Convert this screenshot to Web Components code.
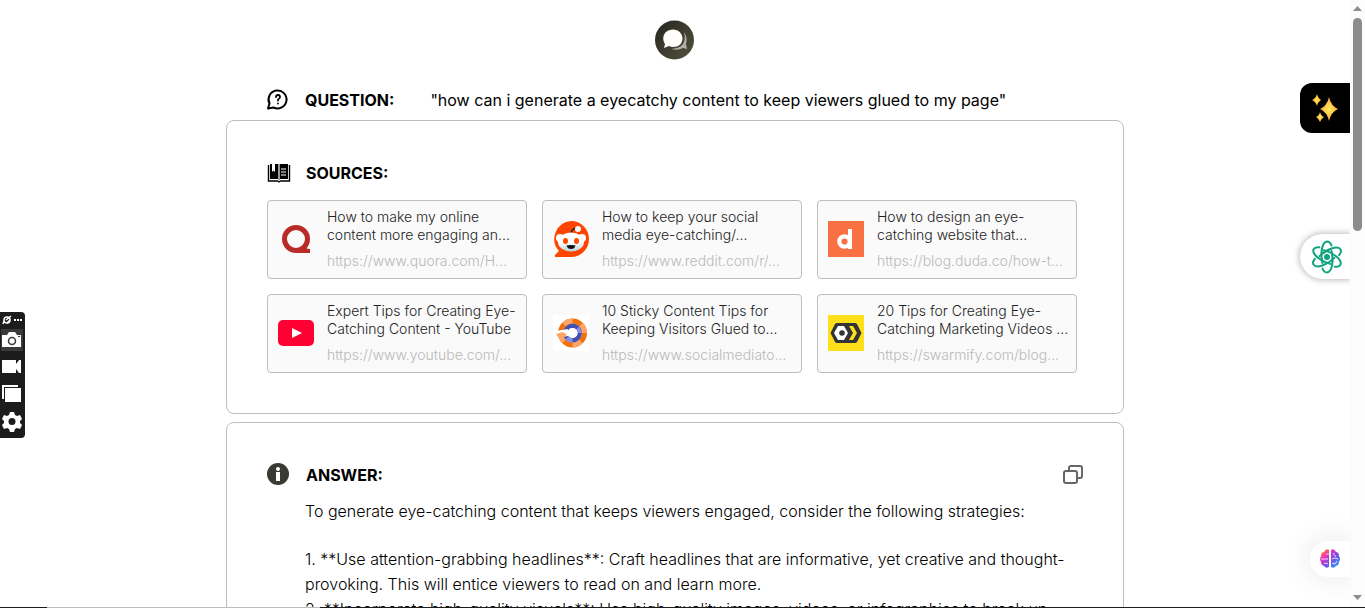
<!DOCTYPE html>
<html lang="en">
<head>
<meta charset="utf-8">
<title>Answer</title>
<style>
html,body{height:100%}
body{margin:0;background:#fff;color:#000;overflow:hidden;font:300 16px/25px Inter,"Open Sans",sans-serif}
</style>
</head>
<body>
<answer-page></answer-page>
<script>
const define = (name, html) => customElements.define(name, class extends HTMLElement {
  constructor() {
    super();
    const t = document.createElement('template');
    t.innerHTML = html;
    this.attachShadow({mode: 'open'}).append(t.content.cloneNode(true));
  }
});

const logos = {
  quora: '<circle cx="18" cy="18" r="11.500" fill="none" stroke="#b92b27" stroke-width="5"/><path d="M21 27l5-3q1 4 6 4v4H19z" fill="#b92b27"/>',
  reddit: '<defs><linearGradient id="g" x2="0" y2="1"><stop offset=".5" stop-color="#fff"/><stop offset="1" stop-color="#bccfd8"/></linearGradient></defs><path d="M18 0a18 18 0 1 1 0 36H3q-2 0-1-2l4-4A18 18 0 0 1 18 0z" fill="#ff4500"/><path d="M18 12q1-4 5-5" fill="none" stroke="#222" stroke-width="1.500"/><circle cx="25" cy="8" r="3" fill="#f4f8fa"/><circle cx="7" cy="17" r="4" fill="#fff"/><circle cx="29" cy="17" r="4" fill="#fff"/><ellipse cx="18" cy="21" rx="13" ry="9.500" fill="url(#g)"/><ellipse cx="12.500" cy="20" rx="2.500" ry="3" fill="#ff4500"/><ellipse cx="23.500" cy="20" rx="2.500" ry="3" fill="#ff4500"/><path d="M13.500 24.500q4.500-1 9 0-1 3.500-4.500 3.500t-4.500-3.500z" fill="#111"/>',
  duda: '<path fill="#f97042" d="M0 0h36v36H0z"/><circle cx="16.500" cy="20.500" r="5.200" fill="none" stroke="#fff" stroke-width="4.200"/><path d="M20 8h4v20h-4z" fill="#fff"/>',
  youtube: '<rect y="5" width="36" height="26" rx="5" fill="#ff0033"/><path d="M14 13l10 5-10 5z" fill="#fff"/>',
  toolbox: '<path fill="#fff" d="M0 0h36v36H0z"/><g fill="none"><circle cx="19.500" cy="18" r="12" stroke="#ef7109" stroke-width="5"/><path d="M11 9.500a12 12 0 0 1 8.500-3.500M28 9.500a12 12 0 0 1 3.500 8.500M28 26.500a12 12 0 0 1-8.500 3.500M7.500 18a12 12 0 0 0 3.500 8.500" stroke="#ffa466" stroke-width="5"/><circle cx="19.500" cy="18" r="7.200" stroke="#4450ae" stroke-width="4.500"/><path d="M14 23a7.200 7.200 0 0 0 5.500 2.200M24.500 13a7.200 7.200 0 0 1 2.200 5" stroke="#8790e4" stroke-width="4"/></g><path d="M3 16l12-2v7l-6 1-6-3z" fill="#fff"/><path d="M3 19l7-2 4 3-5 3-4-1z" fill="#ffa466"/><circle cx="19.500" cy="18" r="5" fill="#fff"/>',
  swarmify: '<path fill="#ffdf1a" d="M0 0h36v36H0z"/><path d="M9 8h18q1 0 2 1l4 8q1 1 0 2l-4 8q-1 1-2 1H9q-1 0-2-1l-4-8q-1-1 0-2l4-8q1-1 2-1z" fill="#343437"/><path d="M10 11h6l4 7-4 7h-6l-4-7z" fill="#fff"/><circle cx="14" cy="18" r="2.800" fill="#343437"/><path d="M21 11h4l4 7-4 7h-4l4-7z" fill="#ffdf1a"/>'
};

customElements.define('source-card', class extends HTMLElement {
  connectedCallback() {
    const root = this.attachShadow({mode: 'open'});
    root.innerHTML = `<style>
      :host{display:block;min-width:0}
      a{box-sizing:border-box;height:79px;display:flex;align-items:center;gap:13px;padding:0 4px 2px 10px;border:1px solid #bebebe;border-radius:4px;background:#fafafa;color:#222;text-decoration:none;overflow:hidden;font-size:14px;line-height:18px}
      svg{flex:none;width:36px;height:36px}
      div{min-width:0;display:flex;flex-direction:column;white-space:nowrap}
      span{color:#b9b9b9;margin-top:8px}
    </style><a href="${this.getAttribute('href')}"><svg viewBox="0 0 36 36" aria-hidden="true">${logos[this.getAttribute('logo')]}</svg><div><slot></slot><span>${this.getAttribute('label')}</span></div></a>`;
  }
});

define('section-title', `<style>
  :host{display:flex;align-items:center;gap:15px}
  h2{margin:0;font-size:16px;line-height:24px;font-weight:700}
  ::slotted(svg){flex:none;width:24px;height:24px}
</style><slot name="icon"></slot><h2><slot></slot></h2>`);

define('content-panel', `<style>
  :host{display:block;box-sizing:border-box;padding:40px;border:1px solid #bebebe;border-radius:8px;background:#fff}
</style><slot></slot>`);

define('page-scrollbar', `<style>
  :host{position:relative;z-index:2;display:flex;flex-direction:column;align-items:center;width:15px;background:#fcfcfc}
  i{width:9px;height:213px;border-radius:5px;background:#8b8b8b;margin-bottom:auto}
  svg{width:15px;height:18px;fill:#8b8b8b}
</style><svg viewBox="0 0 15 18"><path d="M3 11h9L7.500 6z"/></svg><i></i><svg viewBox="0 0 15 18"><path d="M3 5h9l-4.500 5z"/></svg>`);

define('capture-bar', `<style>
  :host{position:fixed;left:0;top:312px;width:25px;height:126px;border-radius:0 4px 4px 0;background:#1c1c1c;display:flex;flex-direction:column}
  button{flex:none;border:0;padding:0;margin:0;background:none;height:27px;width:25px;display:block}
  button:first-of-type{height:15px}
  svg{display:block;width:25px;height:100%}
</style>
<button aria-label="Menu"><svg viewBox="0 0 25 15"><circle cx="7" cy="8" r="3" fill="none" stroke="#fff" stroke-width="1.500"/><path d="M3 12l1-3M6 8l5-4M7 11l3-3" stroke="#fff" stroke-width="1.500"/><path d="M14 7h2v2h-2zM17 7h2v2h-2zM20 7h2v2h-2z" fill="#fff"/></svg></button>
<button aria-label="Screenshot"><svg viewBox="0 0 25 27"><path fill="#3a3a3a" d="M1 2h22v22H1z"/><path d="M2 8h5l2-3h6l2 3h4v12H2z" fill="#fff"/><circle cx="12" cy="14" r="3.500" fill="none" stroke="#3a3a3a" stroke-width="1.500"/><path d="M18 9h2v1h-2z" fill="#333"/></svg></button>
<button aria-label="Record"><svg viewBox="0 0 25 27"><path d="M2 6h14v4l3-4h2v13h-2l-3-4v4H2z" fill="#fff"/></svg></button>
<button aria-label="Windows"><svg viewBox="0 0 25 27"><path d="M2 16V4h16v2H4v12H2z" fill="#fff"/><path d="M5 7h16v14H5z" fill="#fff"/></svg></button>
<button aria-label="Settings"><svg viewBox="0 0 25 27"><g transform="translate(12 13)"><path d="M-2-9h4l1 3 2 1 3-1 2 4-2 2v2l2 2-2 4-3-1-2 1-1 3h-4l-1-3-2-1-3 1-2-4 2-2v-2l-2-2 2-4 3 1 2-1z" fill="#fff"/><circle cy=".500" r="3.500" fill="#1c1c1c"/></g></svg></button>`);

define('side-tools', `<style>
  button{position:fixed;right:15px;padding:0;margin:0;border:0;box-sizing:border-box;display:flex;align-items:center;background:#fff}
  .magic{top:83px;width:50px;height:50px;border-radius:12px 0 0 12px;background:#000;padding-left:12px}
  .atom{top:234px;width:50px;height:45px;border-radius:23px 0 0 23px;box-shadow:0 0 6px 1px #bbb;padding-left:11px}
  .brain{top:541px;width:40px;height:36px;border-radius:18px 0 0 18px;box-shadow:0 0 28px 4px #ededed;padding-left:10px}
</style>
<button class="magic" aria-label="Magic"><svg width="26" height="28" viewBox="0 0 26 28"><defs><radialGradient id="s"><stop stop-color="#ffe85c"/><stop offset=".55" stop-color="#fec84a"/><stop offset="1" stop-color="#f79329"/></radialGradient></defs><g fill="url(#s)"><path d="M17 3q2 9 9 12-7 3-9 12-2-9-9-12 7-3 9-12z"/><path d="M5 0q1 4 4 6-3 2-4 6-1-4-5-6 4-2 5-6z"/><path d="M8 18q1 4 4 5-3 2-4 5-1-3-4-5 3-1 4-5z"/></g></svg></button>
<button class="atom" aria-label="Assistant"><svg width="32" height="34" viewBox="-16 -17 32 34"><defs><path id="petal" d="M-4.500 6C-7-4-5-15 0-15.500q3 0 4.500 4"/></defs><g fill="none" stroke="#10a37f" stroke-width="2" stroke-linecap="round"><use href="#petal"/><use href="#petal" transform="rotate(60)"/><use href="#petal" transform="rotate(120)"/><use href="#petal" transform="rotate(180)"/><use href="#petal" transform="rotate(240)"/><use href="#petal" transform="rotate(300)"/></g><circle r="3" fill="#10a37f"/></svg></button>
<button class="brain" aria-label="Brain"><svg width="20" height="20" viewBox="0 0 20 20"><defs><linearGradient id="b" x1="0" y1="0" x2="1" y2="1"><stop offset=".05" stop-color="#ff9d1c"/><stop offset=".3" stop-color="#f233b0"/><stop offset=".6" stop-color="#6f52ee"/><stop offset="1" stop-color="#19b8f0"/></linearGradient></defs><path d="M9 1v17q-3 2-5-1-3-1-3-4-2-3 0-6 0-4 3-4 2-4 5-2zM11 1v17q3 2 5-1 3-1 3-4 2-3 0-6 0-4-3-4-2-4-5-2z" fill="url(#b)"/><path d="M9 5q-2-1-3 1M1 10h7M4 15q2-2 4 0M13 4l3 4M12 10q3-2 6 0M12 14l3 1 2-3" fill="none" stroke="#f6d3ff"/></svg></button>`);

define('answer-page', `<style>
  :host{display:flex;height:100vh;overflow:hidden}
  main{flex:1;min-width:0;display:flex;flex-direction:column;align-items:center;overflow:hidden}
  .logo{flex:none;width:40px;height:40px;margin:20px 0 28px}
  .col{width:calc(100% - 48px);max-width:898px;display:flex;flex-direction:column;gap:8px}
  .question{display:flex;align-items:center;gap:36px;padding:0 40px;height:24px}
  .question p{margin:0;font-weight:400}
  .sources{display:grid;grid-template-columns:repeat(3,minmax(0,260px));gap:15px;margin-top:15px}
  .head{display:flex;justify-content:space-between;align-items:center}
  .head button{border:0;padding:0;background:none;width:20px;height:20px}
  .head button svg{display:block}
  .copy{margin-left:38px}
  .copy p{margin:12px 0 24px;line-height:24px}
  ol{margin:0;padding:0;list-style:none}
  footer{position:fixed;z-index:3;left:0;right:0;bottom:0;height:1px;background:linear-gradient(90deg,#1c1c1c 47px,#bebebe 47px 320px,#1c1c1c 320px)}
</style>
<main>
  <svg class="logo" viewBox="0 0 40 40" role="img" aria-label="Chat"><defs><linearGradient id="l" x2="1" y2="1"><stop stop-color="#24251f"/><stop offset="1" stop-color="#54533f"/></linearGradient></defs><circle cx="19.500" cy="20" r="19.500" fill="url(#l)"/><path d="M29 12q4 6 2 12l1 5-4-1q-5 3-12 1 17-1 13-17z" fill="#b0b0aa"/><path d="M18 9.500c5.500 0 9.500 4 9.500 9s-4 8.500-9.500 8.500q-2 0-4-1l-5 2 1-4C6 18 9 9.500 18 9.500z" fill="#fffefa"/></svg>
  <div class="col">
    <div class="question">
      <section-title><svg slot="icon" viewBox="0 0 24 24" fill="none" stroke="#000" stroke-width="2" stroke-linecap="round" stroke-linejoin="round"><path d="M2 20.500l1.500-5a9 9 0 1 1 4 4z"/><path d="M10 9q0-2 2-2t2 2q0 1.500-2 2.500v1M12 15.500v.100" stroke-width="1.800"/></svg>QUESTION:</section-title>
      <p>"how can i generate a eyecatchy content to keep viewers glued to my page"</p>
    </div>
    <content-panel>
      <section-title><svg slot="icon" viewBox="0 0 24 24"><path d="M3 3h8v15H3zM13 3h8v15h-8z"/><path d="M11 3h2v16h-2z" fill="#999"/><path d="M5 3h3v8l-1.500-1.500L5 11z" fill="#fff"/><path d="M1.500 4v16h9l1.500 1 1.500-1h9V4" fill="none" stroke="#000" stroke-width="1.400"/><path d="M14 8h5M14 11h5M14 14h5" stroke="#fff"/></svg>SOURCES:</section-title>
      <div class="sources">
        <source-card logo="quora" href="https://www.quora.com/" label="https://www.quora.com/H...">How to make my online<br>content more engaging an...</source-card>
        <source-card logo="reddit" href="https://www.reddit.com/r/" label="https://www.reddit.com/r/...">How to keep your social<br>media eye-catching/...</source-card>
        <source-card logo="duda" href="https://blog.duda.co/" label="https://blog.duda.co/how-t...">How to design an eye-<br>catching website that...</source-card>
        <source-card logo="youtube" href="https://www.youtube.com/" label="https://www.youtube.com/...">Expert Tips for Creating Eye-<br>Catching Content - YouTube</source-card>
        <source-card logo="toolbox" href="https://www.socialmediatoday.com/" label="https://www.socialmediato...">10 Sticky Content Tips for<br>Keeping Visitors Glued to...</source-card>
        <source-card logo="swarmify" href="https://swarmify.com/blog" label="https://swarmify.com/blog...">20 Tips for Creating Eye-<br>Catching Marketing Videos ...</source-card>
      </div>
    </content-panel>
    <content-panel>
      <div class="head">
        <section-title><svg slot="icon" viewBox="0 0 24 24"><circle cx="11" cy="11" r="11" fill="#393a31"/><circle cx="11" cy="6" r="2" fill="#fff"/><path d="M9 9h4v9H9z" fill="#fff"/></svg>ANSWER:</section-title>
        <button aria-label="Copy"><svg width="20" height="20" viewBox="0 0 20 20" fill="none" stroke="#666" stroke-width="2"><path d="M6 6V3q0-2 2-2h9q2 0 2 2v8q0 2-2 2h-3"/><rect x="1" y="6" width="13" height="12" rx="2"/></svg></button>
      </div>
      <div class="copy">
        <p>To generate eye-catching content that keeps viewers engaged, consider the following strategies:</p>
        <ol><li>1. **Use attention-grabbing headlines**: Craft headlines that are informative, yet creative and thought-<br>provoking. This will entice viewers to read on and learn more.</li>
        <li>2. **Incorporate high-quality visuals**: Use high-quality images, videos, or infographics to break up</li></ol>
      </div>
    </content-panel>
  </div>
</main>
<page-scrollbar></page-scrollbar>
<capture-bar></capture-bar>
<side-tools></side-tools>
<footer></footer>`);
</script>
</body>
</html>
